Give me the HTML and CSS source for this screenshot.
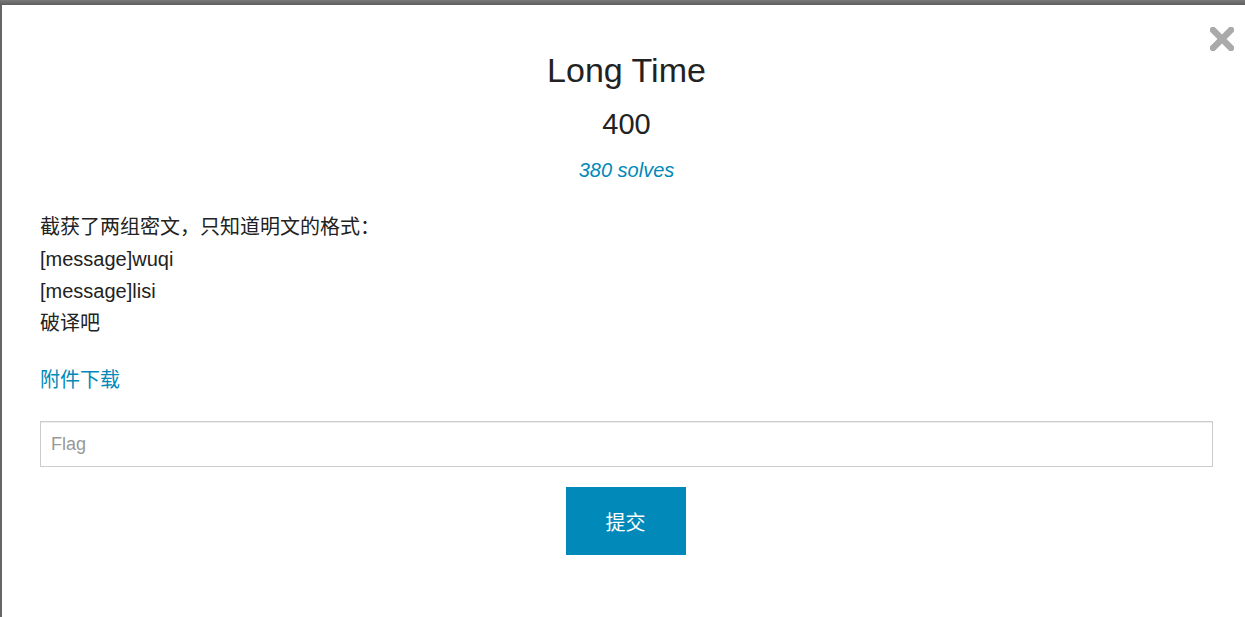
FILE: index.html
```html
<!DOCTYPE html>
<html lang="zh">
<head>
<meta charset="utf-8">
<title>Long Time</title>
<link rel="stylesheet" href="styles.css">
</head>
<body>
<div class="modal">
  <button class="close" aria-label="Close">
    <svg width="24" height="24" viewBox="0 0 24 24"><path d="M3 3 L21 21 M21 3 L3 21" stroke="#aaaaaa" stroke-width="6.5" stroke-linecap="square" fill="none"/></svg>
  </button>
  <h1 class="title">Long Time</h1>
  <div class="points">400</div>
  <div class="solves">380 solves</div>
  <div class="desc">
    <p>截获了两组密文，只知道明文的格式：</p>
    <p>[message]wuqi</p>
    <p>[message]lisi</p>
    <p>破译吧</p>
  </div>
  <a class="attach" href="#">附件下载</a>
  <input class="flag" type="text" placeholder="Flag">
  <div class="actions">
    <button class="submit">提交</button>
  </div>
</div>
</body>
</html>
```
FILE: styles.css
```css
html, body {
  margin: 0;
  padding: 0;
  height: 100%;
}
body {
  background: linear-gradient(#7a7a7a, #5e5e5e 5px, #666666 5px);
  background-color: #666666;
  font-family: "Liberation Sans", Arial, "Noto Sans CJK SC", sans-serif;
  color: #222222;
  overflow: hidden;
}
.modal {
  position: relative;
  margin: 5px 0 0 2px;
  height: calc(100% - 5px);
  background: #ffffff;
  padding: 45px 32px 0 38px;
  box-sizing: border-box;
  display: flex;
  flex-direction: column;
}
.close {
  position: absolute;
  top: 22px;
  right: 11px;
  width: 24px;
  height: 24px;
  padding: 0;
  border: 0;
  background: none;
  cursor: pointer;
}
.close svg { display: block; }
.title {
  margin: 0;
  font-weight: normal;
  font-size: 34px;
  line-height: 40px;
  text-align: center;
  color: #222222;
}
.points {
  margin-top: 16px;
  font-size: 29px;
  line-height: 36px;
  text-align: center;
  color: #222222;
}
.solves {
  margin-top: 14px;
  font-size: 20px;
  line-height: 28px;
  font-style: italic;
  text-align: center;
  color: #0089b9;
}
.desc {
  margin-top: 27px;
  font-size: 20px;
  line-height: 32px;
  color: #222222;
}
.desc p { margin: 0; }
.attach {
  margin-top: 25px;
  align-self: flex-start;
  font-size: 20px;
  line-height: 32px;
  color: #0089b9;
  text-decoration: none;
}
.flag {
  margin-top: 25px;
  height: 46px;
  box-sizing: border-box;
  width: 100%;
  border: 1px solid #cccccc;
  box-shadow: inset 0 1px 1px rgba(0,0,0,0.075);
  padding: 0 10px;
  font-family: "Liberation Sans", Arial, "Noto Sans CJK SC", sans-serif;
  font-size: 18px;
  color: #555555;
  outline: none;
}
.flag::placeholder { color: #999999; }
.actions {
  margin-top: 20px;
  padding-right: 2px;
  display: flex;
  justify-content: center;
}
.submit {
  width: 120px;
  height: 68px;
  border: 0;
  background: #0089b9;
  color: #ffffff;
  font-family: "Liberation Sans", Arial, "Noto Sans CJK SC", sans-serif;
  font-size: 20px;
  cursor: pointer;
}
```
